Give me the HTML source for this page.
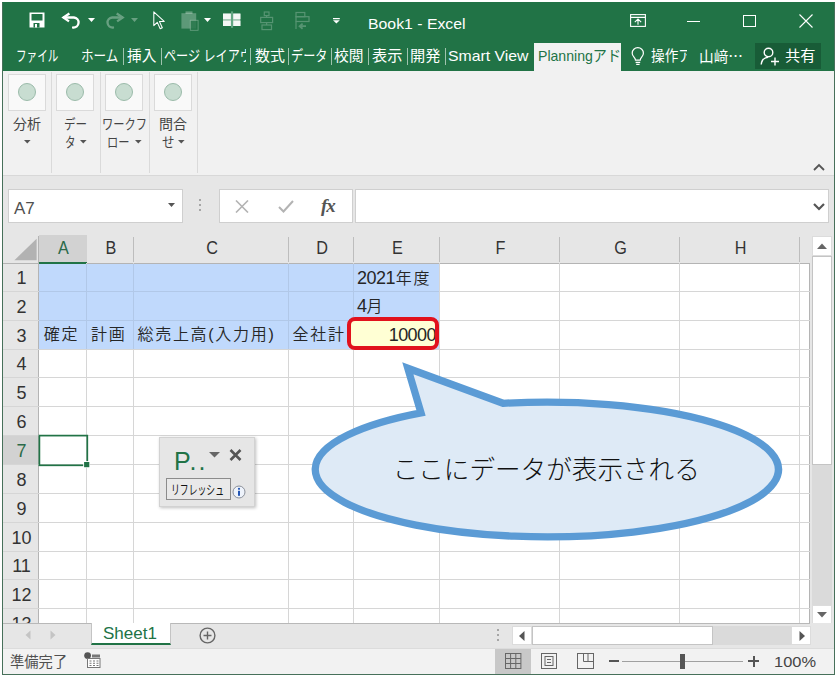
<!DOCTYPE html>
<html lang="ja"><head><meta charset="utf-8"><title>Book1 - Excel</title>
<style>
*{box-sizing:border-box;margin:0;padding:0}
html,body{width:839px;height:680px;background:#fff;overflow:hidden}
body{font-family:"Liberation Sans","Noto Sans CJK JP",sans-serif;color:#262626;position:relative}
div,span,svg{position:absolute}
.t{white-space:nowrap;line-height:1}
.w{color:#fff}
.tab{top:46px;font-size:15px;line-height:20px;color:#fff;white-space:nowrap}
.sp{top:47.5px;width:1px;height:17px;background:#9fc3ae}
.rb{top:74px;width:38px;height:37px;background:#f9f9f9;border:1px solid #dadada}
.rb i{position:absolute;left:9px;top:8px;width:18px;height:18px;border-radius:50%;background:#c8ddd1;border:1px solid #9bbbaa}
.rl{font-size:14px;line-height:18px;text-align:center;color:#333;white-space:nowrap}
.sep{top:72px;width:1px;height:101px;background:#dadada}
.box{background:#fff;border:1px solid #cfcfcf}
.ch{top:235px;height:27px;font-size:18px;line-height:27px;text-align:center;color:#333}
.cs{top:237px;width:1px;height:25px;background:#bdbdbd}
.rn{left:3.5px;width:36px;font-size:18px;overflow:hidden;text-align:center;color:#333}
.vl{top:263px;width:1px;height:360px;background:#d6d6d6}
.hl{left:3px;height:1px;width:807px;background:#d6d6d6}
.c{font-size:16px;letter-spacing:1.7px;font-weight:350;line-height:28px;white-space:nowrap;color:#262626}
.n{font-size:18px;font-weight:400;letter-spacing:-0.55px}
</style></head><body>
<div style="left:2px;top:2px;width:833px;height:673px;background:#e6e6e6;border:1px solid #3f8259"></div>
<div style="left:2px;top:2px;width:833px;height:69px;background:#217346"></div>


<svg style="left:29px;top:12px" width="16" height="16" viewBox="0 0 16 16"><path d="M0.5 0.5h15v15h-15z" fill="#fff"/><rect x="2.5" y="2" width="11" height="6.5" fill="#217346"/><rect x="4.5" y="11" width="6" height="4.5" fill="#217346"/><rect x="6" y="12" width="2" height="3.5" fill="#fff"/></svg>
<svg style="left:61px;top:12px" width="22" height="18" viewBox="0 0 22 18" fill="none" stroke="#fff" stroke-width="2.3"><path d="M8.4 1.5 L2.4 5.5 L8 9.4"/><path d="M3 5.5 H13 A5 5 0 0 1 12.1 15.5" stroke-linecap="round"/></svg>
<svg style="left:88px;top:18px" width="8" height="5" viewBox="0 0 8 5"><path d="M0 0h7L3.5 4z" fill="#fff"/></svg>
<svg style="left:104px;top:12px" width="22" height="18" viewBox="0 0 22 18" fill="none" stroke="#fff" stroke-width="2.3" opacity="0.32"><path d="M12.7 1.5 L18.7 5.5 L13.1 9.4"/><path d="M18.1 5.5 H8.1 A5 5 0 0 0 9 15.5" stroke-linecap="round"/></svg>
<svg style="left:131px;top:18px" width="8" height="5" viewBox="0 0 8 5" opacity="0.32"><path d="M0 0h7L3.5 4z" fill="#fff"/></svg>
<svg style="left:152.5px;top:11px" width="14" height="20" viewBox="0 0 14 20"><path d="M0.8 0.9 L0.8 14.6 L4.3 11.4 L7.2 17.8 L9.3 16.8 L6.5 10.6 L11.2 10.4 Z" fill="#217346" stroke="#fff" stroke-width="1.05" stroke-linejoin="round"/></svg>
<svg style="left:180px;top:11px" width="20" height="20" viewBox="0 0 20 20"><rect x="1.4" y="2.2" width="14.8" height="15.4" fill="#fff" opacity="0.27"/><rect x="5.5" y="0.4" width="7" height="2.6" fill="#fff" opacity="0.3"/><rect x="10.3" y="9.3" width="7.8" height="10" fill="#217346" opacity="0.75"/><rect x="10.3" y="9.3" width="7.8" height="10" fill="none" stroke="#fff" stroke-width="0.9" opacity="0.3"/></svg>
<svg style="left:204px;top:18px" width="8" height="5" viewBox="0 0 8 5"><path d="M0 0h7L3.5 4z" fill="#fff"/></svg>
<svg style="left:223px;top:11px" width="18" height="18" viewBox="0 0 18 18"><rect x="0" y="2.6" width="17.4" height="12.4" fill="#a9cbb8"/><rect x="0" y="2.6" width="7.8" height="5.4" fill="#f4f7f5"/><rect x="10.2" y="2.6" width="7.2" height="5.4" fill="#f4f7f5"/><rect x="0" y="9.8" width="7.8" height="5.2" fill="#f4f7f5"/><rect x="10.2" y="9.8" width="7.2" height="5.2" fill="#f4f7f5"/><rect x="8" y="0.4" width="2.1" height="16.4" fill="#62a682"/></svg>
<svg style="left:259px;top:11px" width="15" height="20" viewBox="0 0 15 20" opacity="0.24" fill="none" stroke="#fff" stroke-width="1.2"><rect x="5.3" y="1" width="4.7" height="3.6"/><rect x="1.7" y="6.4" width="11.9" height="5.2"/><rect x="3" y="14" width="9.5" height="4.6"/><path d="M7.6 4.6V6.4M7.6 11.6V14"/></svg>
<svg style="left:295px;top:11px" width="16" height="20" viewBox="0 0 16 20" opacity="0.24" fill="none" stroke="#fff" stroke-width="1.2"><rect x="1" y="1.5" width="8.8" height="4.2"/><rect x="1" y="5.7" width="13" height="4.8"/><path d="M1 10.5V18"/><path d="M11 15.2H5M7.6 12.6L4.6 15.2L7.6 17.8" stroke-width="1.8"/></svg>
<svg style="left:332.6px;top:17.8px" width="8" height="6" viewBox="0 0 8 6"><path d="M0 0h6.8v1.2H0z M0 2.2h6.8L3.4 5.6z" fill="#fff"/></svg>
<span class="t" style="left:367.5px;top:14px;font-size:15px;line-height:20px;color:#fff;transform:scaleX(1.054);transform-origin:0 0">Book1 - Excel</span>
<svg style="left:630px;top:14px" width="16" height="13" viewBox="0 0 16 13" fill="none" stroke="#fff" stroke-width="1.1"><rect x="0.6" y="0.6" width="14.8" height="11.8"/><path d="M0.6 3.4h14.8M8 10.8V5M4.8 8.2L8 5l3.2 3.2"/></svg>
<div style="left:687px;top:21px;width:13px;height:1px;background:#fff"></div>
<div style="left:743px;top:15px;width:13px;height:12px;border:1px solid #fff"></div>
<svg style="left:799px;top:14px" width="14" height="14" viewBox="0 0 14 14"><path d="M0.5 0.5l13 13M13.5 0.5l-13 13" stroke="#fff" stroke-width="1.1"/></svg>

<span class="t" style="left:16.3px;top:46px;font-size:15px;line-height:20px;color:#fff;transform:scaleX(0.706);transform-origin:0 0">ファイル</span>
<span class="t" style="left:81.3px;top:46px;font-size:15px;line-height:20px;color:#fff;transform:scaleX(0.839);transform-origin:0 0">ホーム</span>
<span class="t" style="left:127.3px;top:46px;font-size:15px;line-height:20px;color:#fff;transform:scaleX(0.979);transform-origin:0 0">挿入</span>
<div style="left:163px;top:44px;width:82.5px;height:26px;overflow:hidden"><span class="t" style="left:1.3px;top:2px;font-size:15px;line-height:20px;color:#fff;transform:scaleX(0.808);transform-origin:0 0">ページ レイアウ</span></div>
<span class="t" style="left:254.8px;top:46px;font-size:15px;line-height:20px;color:#fff;transform:scaleX(0.996);transform-origin:0 0">数式</span>
<span class="t" style="left:291.3px;top:46px;font-size:15px;line-height:20px;color:#fff;transform:scaleX(0.809);transform-origin:0 0">データ</span>
<span class="t" style="left:334.3px;top:46px;font-size:15px;line-height:20px;color:#fff;transform:scaleX(0.979);transform-origin:0 0">校閲</span>
<span class="t" style="left:372.3px;top:46px;font-size:15px;line-height:20px;color:#fff;transform:scaleX(1.013);transform-origin:0 0">表示</span>
<span class="t" style="left:410.3px;top:46px;font-size:15px;line-height:20px;color:#fff;transform:scaleX(1.013);transform-origin:0 0">開発</span>
<span class="t" style="left:448.3px;top:46px;font-size:15px;line-height:20px;color:#fff;transform:scaleX(1.052);transform-origin:0 0">Smart View</span>
<div class="sp" style="left:123px"></div>
<div class="sp" style="left:161px"></div>
<div class="sp" style="left:250px"></div>
<div class="sp" style="left:288px"></div>
<div class="sp" style="left:331px"></div>
<div class="sp" style="left:368px"></div>
<div class="sp" style="left:407px"></div>
<div class="sp" style="left:445px"></div>
<div style="left:534px;top:43px;width:87px;height:28px;background:#f1f1f1"></div>
<span class="t" style="left:537.5px;top:46px;font-size:15px;line-height:20px;color:#217346;transform:scaleX(0.939);transform-origin:0 0">Planningアド</span>
<svg style="left:631px;top:47px" width="14" height="19" viewBox="0 0 14 19" fill="none" stroke="#fff" stroke-width="1.2"><path d="M4.5 13.2C4.5 10.5 1.2 9.6 1.2 6.2A5.6 5.6 0 0 1 12.4 6.2C12.4 9.6 9.2 10.5 9.2 13.2Z"/><path d="M4.6 15.3h4.6M5.2 17.3h3.4"/></svg>
<div style="left:650px;top:45px;width:37px;height:24px;overflow:hidden"><span class="t" style="left:0.5px;top:1px;font-size:15px;line-height:20px;color:#fff;transform:scaleX(0.909);transform-origin:0 0">操作アシ</span></div>
<span class="t" style="left:698.5px;top:46px;font-size:15px;line-height:20px;color:#fff;transform:scaleX(0.977);transform-origin:0 0">山﨑<span style="position:static;font-family:'Noto Sans CJK JP',sans-serif">…</span></span>
<div style="left:755px;top:43px;width:66px;height:26px;background:#185c37"></div>
<svg style="left:760px;top:47px" width="20" height="19" viewBox="0 0 20 19" fill="none" stroke="#fff" stroke-width="1.4"><circle cx="8.5" cy="5.5" r="4.3"/><path d="M1.2 17.5C1.8 12.8 4.6 10.6 8 10.4M15 10.5v8M11 14.5h8"/></svg>
<span class="t" style="left:785px;top:46px;font-size:15px;line-height:20px;color:#fff;transform:scaleX(1.016);transform-origin:0 0">共有</span>
<div style="left:3px;top:71px;width:831px;height:105px;background:#f1f1f1;border-bottom:1px solid #d8d8d8"></div>
<div class="rb" style="left:8px"><i></i></div>
<div class="rb" style="left:56px"><i></i></div>
<div class="rb" style="left:105px"><i></i></div>
<div class="rb" style="left:154px"><i></i></div>
<div class="sep" style="left:51px"></div>
<div class="sep" style="left:100px"></div>
<div class="sep" style="left:149px"></div>
<div class="sep" style="left:197px"></div>
<span class="t" style="left:13px;top:115px;font-size:14px;line-height:18px;color:#444;">分析</span>
<svg style="left:23.7px;top:140px" width="7" height="4" viewBox="0 0 7 4"><path d="M0 0h6.6L3.3 3.6z" fill="#555"/></svg>
<span class="t" style="left:64px;top:115px;font-size:14px;line-height:18px;color:#444;transform:scaleX(0.821);transform-origin:0 0">デー</span>
<span class="t" style="left:65px;top:133px;font-size:14px;line-height:18px;color:#444;transform:scaleX(0.750);transform-origin:0 0">タ</span>
<svg style="left:79.5px;top:140px" width="7" height="4" viewBox="0 0 7 4"><path d="M0 0h6.6L3.3 3.6z" fill="#555"/></svg>
<span class="t" style="left:101.5px;top:115px;font-size:14px;line-height:18px;color:#444;transform:scaleX(0.804);transform-origin:0 0">ワークフ</span>
<span class="t" style="left:107px;top:133px;font-size:14px;line-height:18px;color:#444;transform:scaleX(0.804);transform-origin:0 0">ロー</span>
<svg style="left:135px;top:140px" width="7" height="4" viewBox="0 0 7 4"><path d="M0 0h6.6L3.3 3.6z" fill="#555"/></svg>
<span class="t" style="left:159px;top:115px;font-size:14px;line-height:18px;color:#444;">問合</span>
<span class="t" style="left:162px;top:133px;font-size:14px;line-height:18px;color:#444;transform:scaleX(0.893);transform-origin:0 0">せ</span>
<svg style="left:178px;top:140px" width="7" height="4" viewBox="0 0 7 4"><path d="M0 0h6.6L3.3 3.6z" fill="#555"/></svg>
<svg style="left:813px;top:163px" width="12" height="8" viewBox="0 0 12 8"><path d="M1 7l5-5l5 5" fill="none" stroke="#555" stroke-width="1.8"/></svg>

<div class="box" style="left:8px;top:189px;width:175px;height:34px"></div>
<span class="t" style="left:14px;top:199px;font-size:17px;line-height:20px;color:#505050">A7</span>
<svg style="left:168px;top:203px" width="7" height="4" viewBox="0 0 7 4"><path d="M0 0h7L3.5 4z" fill="#555"/></svg>
<div style="left:199px;top:199px;width:2px;height:2px;background:#a6a6a6;box-shadow:0 5px 0 #a6a6a6,0 10px 0 #a6a6a6"></div>
<div class="box" style="left:219px;top:189px;width:134px;height:34px"></div>
<svg style="left:235px;top:200px" width="14" height="13" viewBox="0 0 14 13"><path d="M1 0.5l12 12M13 0.5l-12 12" stroke="#b3b3b3" stroke-width="1.6"/></svg>
<svg style="left:278px;top:200px" width="16" height="13" viewBox="0 0 16 13"><path d="M1 7l4.5 4.5L15 1" fill="none" stroke="#b3b3b3" stroke-width="2"/></svg>
<span class="t" style="left:321px;top:195px;font-family:'Liberation Serif',serif;font-style:italic;font-weight:bold;font-size:19px;line-height:22px;color:#555;letter-spacing:-1px">fx</span>
<div class="box" style="left:355px;top:189px;width:474px;height:34px"></div>
<svg style="left:813px;top:203px" width="12" height="8" viewBox="0 0 12 8"><path d="M1 1l5 5l5-5" fill="none" stroke="#555" stroke-width="2.2"/></svg>

<div style="left:39px;top:264px;width:770px;height:359px;background:#fff"></div>
<div style="left:39px;top:264px;width:400px;height:85px;background:#c0d9fc"></div>
<div style="left:39px;top:235px;width:48px;height:29px;background:#d2d2d2"></div>
<div style="left:3px;top:435px;width:36px;height:30px;background:#d2d2d2"></div>
<svg style="left:14px;top:238px" width="24" height="23" viewBox="14 238 24 23"><path d="M36.6 238.8V260.2H14.4z" fill="#b2b2b2"/></svg>
<div style="left:3px;top:263px;width:807px;height:1px;background:#b4b4b4"></div>
<div style="left:38px;top:236px;width:1px;height:387px;background:#b4b4b4"></div>
<div style="left:39px;top:262px;width:48px;height:2px;background:#217346"></div>
<div class="ch" style="left:39.8px;width:47px;color:#2b6a49;transform:scaleX(.9)">A</div>
<div class="ch" style="left:87.8px;width:46px;color:#333;transform:scaleX(.9)">B</div>
<div class="cs" style="left:133px"></div>
<div class="ch" style="left:134.8px;width:154px;color:#333;transform:scaleX(.9)">C</div>
<div class="cs" style="left:288px"></div>
<div class="ch" style="left:289.8px;width:64px;color:#333;transform:scaleX(.9)">D</div>
<div class="cs" style="left:353px"></div>
<div class="ch" style="left:354.8px;width:85px;color:#333;transform:scaleX(.9)">E</div>
<div class="cs" style="left:439px"></div>
<div class="ch" style="left:440.8px;width:119px;color:#333;transform:scaleX(.9)">F</div>
<div class="cs" style="left:559px"></div>
<div class="ch" style="left:560.8px;width:119px;color:#333;transform:scaleX(.9)">G</div>
<div class="cs" style="left:679px"></div>
<div class="ch" style="left:680.8px;width:119px;color:#333;transform:scaleX(.9)">H</div>
<div class="cs" style="left:799px"></div>
<div class="vl" style="left:86px"></div>
<div class="vl" style="left:133px"></div>
<div class="vl" style="left:288px"></div>
<div class="vl" style="left:353px"></div>
<div class="vl" style="left:439px"></div>
<div class="vl" style="left:559px"></div>
<div class="vl" style="left:679px"></div>
<div class="vl" style="left:799px"></div>
<div class="vl" style="left:809px;background:#b4b4b4"></div>
<div class="hl" style="top:291px"></div>
<div class="hl" style="top:320px"></div>
<div class="hl" style="top:349px"></div>
<div class="hl" style="top:377px"></div>
<div class="hl" style="top:406px"></div>
<div class="hl" style="top:435px"></div>
<div class="hl" style="top:464px"></div>
<div class="hl" style="top:493px"></div>
<div class="hl" style="top:522px"></div>
<div class="hl" style="top:551px"></div>
<div class="hl" style="top:579px"></div>
<div class="hl" style="top:608px"></div>
<div style="left:86px;top:264px;width:1px;height:85px;background:#b1c8e8"></div>
<div style="left:133px;top:264px;width:1px;height:85px;background:#b1c8e8"></div>
<div style="left:288px;top:264px;width:1px;height:85px;background:#b1c8e8"></div>
<div style="left:353px;top:264px;width:1px;height:85px;background:#b1c8e8"></div>
<div style="left:39px;top:291px;width:400px;height:1px;background:#b1c8e8"></div>
<div style="left:39px;top:320px;width:400px;height:1px;background:#b1c8e8"></div>
<div class="rn" style="top:264px;height:27px;line-height:29px;color:#333">1</div>
<div class="rn" style="top:292px;height:28px;line-height:30px;color:#333">2</div>
<div class="rn" style="top:321px;height:28px;line-height:30px;color:#333">3</div>
<div class="rn" style="top:350px;height:27px;line-height:29px;color:#333">4</div>
<div class="rn" style="top:378px;height:28px;line-height:30px;color:#333">5</div>
<div class="rn" style="top:407px;height:28px;line-height:30px;color:#333">6</div>
<div class="rn" style="top:436px;height:28px;line-height:30px;color:#2b6a49">7</div>
<div class="rn" style="top:465px;height:28px;line-height:30px;color:#333">8</div>
<div class="rn" style="top:494px;height:28px;line-height:30px;color:#333">9</div>
<div class="rn" style="top:523px;height:28px;line-height:30px;color:#333">10</div>
<div class="rn" style="top:552px;height:27px;line-height:29px;color:#333">11</div>
<div class="rn" style="top:580px;height:28px;line-height:30px;color:#333">12</div>
<div class="rn" style="top:609px;height:28px;line-height:30px;color:#333">13</div>
<span class="c" style="left:357px;top:264.3px;"><span class="n" style="position:static;margin-right:1px">2021</span>年度</span>
<span class="c" style="left:357px;top:292.3px;"><span class="n" style="position:static">4</span>月</span>
<span class="c" style="left:43.7px;top:321.3px;">確定</span>
<span class="c" style="left:91px;top:321.3px;">計画</span>
<span class="c" style="left:137.5px;top:321.3px;">総売上高(入力用)</span>
<span class="c" style="left:292.5px;top:321.3px;">全社計</span>
<div style="left:347px;top:317px;width:92px;height:33px;background:#ffffd4;border:4px solid #e1121d;border-radius:8px;overflow:hidden"><span class="c n" style="right:-1px;top:0px">10000</span></div>
<svg style="left:36px;top:430px" width="60" height="44" viewBox="36 430 60 44"><rect x="39.4" y="435.6" width="47.9" height="29.7" fill="none" stroke="#217346" stroke-width="1.7"/><rect x="83.2" y="461.1" width="6.6" height="6.6" fill="#fff"/><rect x="84.1" y="462.0" width="5.2" height="5.2" fill="#217346"/></svg>

<svg style="left:300px;top:350px" width="500" height="200" viewBox="300 350 500 200" overflow="visible">
<path d="M421 412.9 L407.8 368.3 L503 403.3 A231.6 67.4 0 1 1 421 412.9 Z" fill="#deeaf6" stroke="#5b9bd5" stroke-width="7.3" stroke-linejoin="miter" stroke-miterlimit="10"/>
<text x="546.2" y="478.6" text-anchor="middle" font-family="'Liberation Sans','Noto Sans CJK JP',sans-serif" font-weight="300" font-size="25.6" fill="#111">ここにデータが表示される</text>
</svg>


<div style="left:159px;top:437px;width:96px;height:70px;background:#e6e6e6;border:1px solid #d2d2d2;box-shadow:1px 1px 3px rgba(0,0,0,.25)"></div>
<span class="t" style="left:174px;top:446.7px;font-size:25px;line-height:28px;color:#217346;letter-spacing:2px">P..</span>
<svg style="left:209px;top:452px" width="12" height="6" viewBox="0 0 12 6"><path d="M0 0h11L5.5 5.5z" fill="#666"/></svg>
<svg style="left:229px;top:449px" width="13" height="12" viewBox="0 0 13 12"><path d="M1.5 1l10 10M11.5 1l-10 10" stroke="#555" stroke-width="2.6"/></svg>
<div style="left:166px;top:478px;width:65px;height:22px;background:#e9e9e9;border:1px solid #8c8c8c"></div>
<span class="t" style="left:171px;top:482px;font-size:13px;line-height:15px;color:#111;transform:scaleX(.68);transform-origin:0 0">リフレッシュ</span>
<svg style="left:232px;top:485px" width="14" height="14" viewBox="0 0 14 14"><circle cx="7" cy="7" r="6" fill="#eef3fb" stroke="#8a8f99" stroke-width="1"/><circle cx="7" cy="3.8" r="1.1" fill="#2456b4"/><rect x="6" y="5.8" width="2" height="5" fill="#2456b4"/></svg>


<div style="left:812px;top:236px;width:20px;height:387px;background:#dadada"></div>
<div style="left:812px;top:236px;width:20px;height:20px;background:#fff;border:1px solid #dcdcdc"></div>
<svg style="left:817px;top:243px" width="10" height="6" viewBox="0 0 10 6"><path d="M0 6h10L5 0.5z" fill="#666"/></svg>
<div style="left:812px;top:256px;width:20px;height:209px;background:#fff;border:1px solid #c4c4c4"></div>
<div style="left:812px;top:605px;width:20px;height:19px;background:#fff;border:1px solid #dcdcdc"></div>
<svg style="left:817px;top:612px" width="10" height="6" viewBox="0 0 10 6"><path d="M0 0h10L5 5.5z" fill="#666"/></svg>


<div style="left:3px;top:623px;width:831px;height:24px;background:#e6e6e6"></div>
<div style="left:3px;top:623px;width:807px;height:1px;background:#b8b8b8"></div>
<svg style="left:25px;top:630px" width="6" height="10" viewBox="0 0 6 10"><path d="M5.5 0.5v9L0.5 5z" fill="#c4c4c4"/></svg>
<svg style="left:50px;top:630px" width="6" height="10" viewBox="0 0 6 10"><path d="M0.5 0.5v9L5.5 5z" fill="#c4c4c4"/></svg>
<div style="left:91px;top:623px;width:80px;height:22px;background:#fff;border-bottom:2px solid #217346;border-left:1px solid #c4c4c4;border-right:1px solid #c4c4c4"></div>
<span class="t" style="left:103px;top:623.5px;font-size:17px;line-height:20px;color:#217346">Sheet1</span>
<svg style="left:199px;top:627px" width="17" height="17" viewBox="0 0 17 17" fill="none" stroke="#666" stroke-width="1.4"><circle cx="8.5" cy="8.5" r="7.4"/><path d="M8.5 4.5v8M4.5 8.5h8"/></svg>
<div style="left:497px;top:629px;width:2px;height:2px;background:#a6a6a6;box-shadow:0 5px 0 #a6a6a6,0 10px 0 #a6a6a6"></div>
<div style="left:512px;top:626px;width:299px;height:19px;background:#dadada"></div>
<div style="left:512px;top:626px;width:20px;height:19px;background:#fff;border:1px solid #dcdcdc"></div>
<svg style="left:519px;top:631px" width="6" height="10" viewBox="0 0 6 10"><path d="M5.5 0v10L0 5z" fill="#555"/></svg>
<div style="left:532px;top:626px;width:181px;height:19px;background:#fff;border:1px solid #c4c4c4"></div>
<div style="left:791px;top:626px;width:20px;height:19px;background:#fff;border:1px solid #dcdcdc"></div>
<svg style="left:799px;top:631px" width="6" height="10" viewBox="0 0 6 10"><path d="M0.5 0v10L6 5z" fill="#555"/></svg>


<div style="left:3px;top:648px;width:831px;height:26px;background:#f2f2f2;border-top:1px solid #dcdcdc"></div>
<span class="t" style="left:10px;top:652.5px;font-size:14.3px;line-height:18px;color:#505050">準備完了</span>
<svg style="left:84px;top:652px" width="17" height="16" viewBox="0 0 17 16"><circle cx="3.6" cy="3.6" r="3.4" fill="#555"/><path d="M8 2.5h8v3H8z" fill="#777"/><rect x="3.5" y="6.5" width="12.5" height="9" fill="#fff" stroke="#777" stroke-width="1"/><path d="M5.5 9h2M9 9h2M12.5 9h2M5.5 11.3h2M9 11.3h2M12.5 11.3h2M5.5 13.5h2M9 13.5h2M12.5 13.5h2" stroke="#777" stroke-width="1.1"/></svg>
<div style="left:495px;top:649px;width:36px;height:25px;background:#c8c8c8"></div>
<svg style="left:504.5px;top:653px" width="17" height="16" viewBox="0 0 17 16" fill="none" stroke="#666" stroke-width="1"><rect x="0.5" y="0.5" width="15.4" height="15"/><path d="M5.6 0.5v15M10.8 0.5v15M0.5 5.5h15.4M0.5 10.5h15.4"/></svg>
<svg style="left:541px;top:653px" width="16" height="16" viewBox="0 0 16 16" fill="none" stroke="#666" stroke-width="1"><rect x="0.5" y="0.5" width="15" height="15"/><rect x="4" y="3.5" width="8" height="9"/><path d="M6 6.5h4M6 9.5h4"/></svg>
<svg style="left:577px;top:653px" width="17" height="16" viewBox="0 0 17 16" fill="none" stroke="#666" stroke-width="1"><rect x="0.5" y="0.5" width="16" height="15"/><path d="M6.5 0.5v8M11 0.5v8M6.5 8.5h10"/></svg>
<div style="left:609px;top:660px;width:10px;height:2px;background:#555"></div>
<div style="left:622px;top:661px;width:121px;height:1px;background:#a0a0a0"></div>
<div style="left:680px;top:654px;width:5px;height:15px;background:#555"></div>
<div style="left:748px;top:660px;width:11px;height:2px;background:#555"></div>
<div style="left:752.5px;top:655.5px;width:2px;height:11px;background:#555"></div>
<span class="t" style="left:773.5px;top:652px;font-size:15px;line-height:20px;color:#444;transform:scaleX(1.094);transform-origin:0 0">100%</span>

<div style="left:2px;top:2px;width:833px;height:673px;border:1px solid #47705a;border-top-color:#217346"></div>
</body></html>
